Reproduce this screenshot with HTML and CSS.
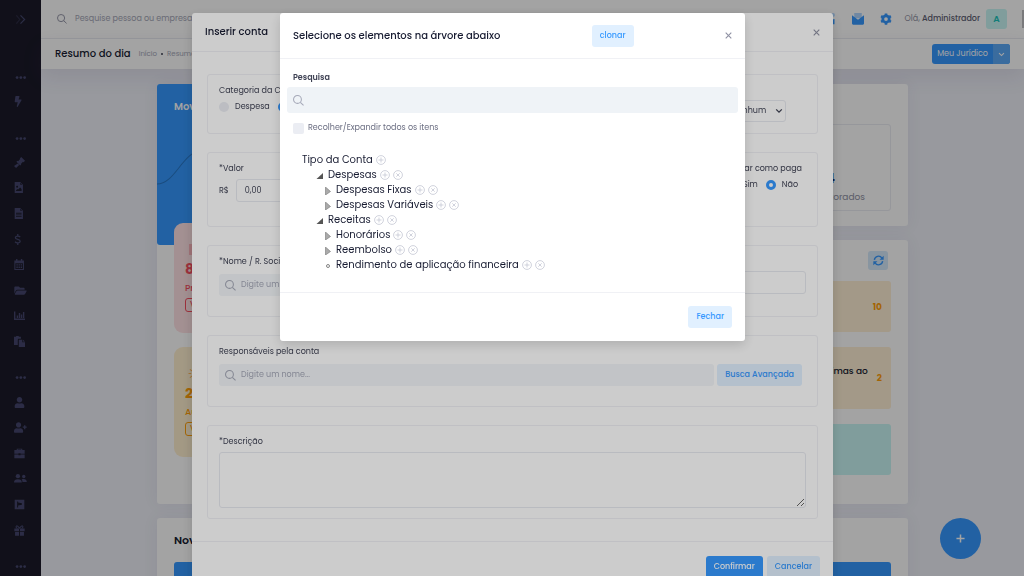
FILE: index.html
```html
<!DOCTYPE html>
<html lang="pt-BR">
<head>
    <meta charset="UTF-8">
    <meta name="viewport" content="width=device-width, initial-scale=1.0">
    <title>Resumo do dia</title>
    <link rel="stylesheet" href="styles.css">
</head>
<body>

<svg class="sprite" aria-hidden="true">
    <symbol id="dots" viewBox="0 0 16 16"><circle cx="3" cy="8" r="2"/><circle cx="8.500" cy="8" r="2"/><circle cx="14" cy="8" r="2"/></symbol>
    <symbol id="bolt" viewBox="0 0 448 512"><path d="M296 160H180.600l42.600-129.800C227.200 15 215.700 0 200 0H56C44 0 33.800 8.900 32.200 20.800l-32 240C-1.700 275.200 9.500 288 24 288h118.700L96.600 482.500c-3.600 15.200 8 29.500 23.300 29.500 8.400 0 16.400-4.400 20.800-12l176-304c9.300-15.900-2.200-36-20.700-36z"/></symbol>
    <symbol id="gavel" viewBox="0 0 16 16"><path d="M10.500 0L16 5.500 14 7.500l-1-.5-3 3 .5 1L9 12.500 3.500 7 5 5.500l1 .5 3-3-.5-1zM5.500 9.500l2 2L3 16 0 13z"/></symbol>
    <symbol id="file-img" viewBox="0 0 16 16"><path fill-rule="evenodd" d="M1 0h8l4 4v12H1zM9 1v3h3zM3 13h8v-3L9 8l-3 3-1-1-2 2zM4.500 5.500a1.300 1.300 0 1 0 .1 0z"/></symbol>
    <symbol id="file" viewBox="0 0 16 16"><path fill-rule="evenodd" d="M1 0h8l4 4v12H1zM9 1v3h3zM3 7v1.200h8V7zM3 9.500v1.200h8V9.500zM3 12v1.200h8V12z"/></symbol>
    <symbol id="dollar" viewBox="0 0 16 16"><path fill="none" stroke="currentColor" stroke-width="1.900" d="M9 4.500C7.500 2.500 2 2.500 2 5.500c0 3 7 1.800 7 5 0 3-5.500 3-7.500.8M5.500 0v3M5.500 13v3"/></symbol>
    <symbol id="calendar" viewBox="0 0 16 16"><path fill-rule="evenodd" d="M3 0h2v2h5V0h2v2h2.500v14H.5V2H3zM2 6v8.500h11V6zM3.500 7.500h2v2h-2zM6.600 7.500h2v2h-2zM9.700 7.500h2v2h-2zM3.500 11h2v2h-2zM6.600 11h2v2h-2zM9.700 11h2v2h-2z"/></symbol>
    <symbol id="folder" viewBox="0 0 576 512"><path d="M572.700 292.100L500.300 416.200A64 64 0 0 1 445 448H45c-18.500 0-30-20-20.700-36l72.400-124.200A64 64 0 0 1 152 256h400c18.500 0 30 20 20.700 36.100zM152 224h328v-48c0-26.500-21.500-48-48-48H272l-64-64H48C21.500 64 0 85.500 0 112v278l69-118.400C86.200 242.300 118 224 152 224z"/></symbol>
    <symbol id="chart" viewBox="0 0 16 16"><path d="M0 2h2v10.500h14v2H0zM4 8h2v3.500H4zM7 4.500h2v7H7zM10 6.500h2v5h-2zM13 3h2v8.500h-2z"/></symbol>
    <symbol id="copy" viewBox="0 0 16 16"><path d="M0 1h3a1.800 1.800 0 0 1 4 0h3v3H7.500C6 4 5.500 4.500 5.500 6v7H0zM7 5.500h5V9h4v7H7zM13 5.500L16 8h-3z"/></symbol>
    <symbol id="user" viewBox="0 0 448 512"><path d="M224 256c70.700 0 128-57.300 128-128S294.700 0 224 0 96 57.300 96 128s57.300 128 128 128zm89.600 32h-16.700c-22.200 10.200-46.900 16-72.900 16s-50.600-5.800-72.900-16h-16.700C60.200 288 0 348.200 0 422.400V464c0 26.500 21.500 48 48 48h352c26.500 0 48-21.500 48-48v-41.600c0-74.200-60.200-134.400-134.400-134.400z"/></symbol>
    <symbol id="user-plus" viewBox="0 0 640 512"><path d="M224 256c70.700 0 128-57.300 128-128S294.700 0 224 0 96 57.300 96 128s57.300 128 128 128zm89.600 32h-16.700c-22.200 10.200-46.900 16-72.900 16s-50.600-5.800-72.900-16h-16.700C60.200 288 0 348.200 0 422.400V464c0 26.500 21.500 48 48 48h352c26.500 0 48-21.500 48-48v-41.600c0-74.200-60.200-134.400-134.400-134.400zM624 208h-64v-64h-64v64h-64v64h64v64h64v-64h64z"/></symbol>
    <symbol id="case" viewBox="0 0 16 16"><path fill-rule="evenodd" d="M4 3V1h8v2h3.500v5.500H9.500v-1h-3v1H.5V3zM5.500 2.300V3h5v-.7zM.5 9.500h6v1.200h3V9.500h6V15H.5z"/></symbol>
    <symbol id="users" viewBox="0 0 20 16"><circle cx="6" cy="4.500" r="3.300"/><path d="M0 14c0-4 2-5 6-5s6 1 6 5z"/><circle cx="15" cy="5" r="2.600"/><path d="M13 13.500c0-2-.4-3-1.300-4.200 4-1.500 8-.5 8 4.200z"/></symbol>
    <symbol id="square" viewBox="0 0 16 16"><path fill-rule="evenodd" d="M1 1h14v14H1zM4.500 3.500v9H6V9.500l5.500-1V6L6 5.200V3.500z"/></symbol>
    <symbol id="gift" viewBox="0 0 16 16"><path d="M.5 5h6.800v4H.5zM8.700 5h6.800v4H8.700zM1.500 10h5.800v5.500H1.500zM8.700 10h5.800v5.500H8.700z"/><path fill="none" stroke="currentColor" stroke-width="1.500" d="M8 5C6 .5 3 .5 3 2.800 3 4 4 4.500 5 5M8 5c2-4.500 5-4.500 5-2.200C13 4 12 4.500 11 5"/></symbol>
    <symbol id="search" viewBox="0 0 16 16"><g fill="none" stroke="currentColor" stroke-width="1.500"><circle cx="6.500" cy="6.500" r="5.700"/><path d="M10.700 10.700l4.600 4.300"/></g></symbol>
    <symbol id="close" viewBox="0 0 10 10"><path fill="none" stroke="currentColor" stroke-width="1.600" d="M1 1l8 8M9 1L1 9"/></symbol>
    <symbol id="chevron" viewBox="0 0 10 10"><path fill="none" stroke="currentColor" stroke-width="1.600" d="M1.500 3L5 6.500 8.500 3"/></symbol>
    <symbol id="forward" viewBox="0 0 16 16"><g fill="none" stroke="currentColor" stroke-width="1.700"><path opacity=".4" d="M2 2l5 6-5 6"/><path d="M8 2l6 6-6 6"/></g></symbol>
    <symbol id="chat" viewBox="0 0 16 16"><rect x="1" y="0" width="13" height="14" rx="4"/></symbol>
    <symbol id="bell" viewBox="0 0 16 16"><path d="M0 1h8v5c0 2 1.500 3 6 2v7H0z"/><circle cx="12" cy="2.500" r="2.500" opacity=".4"/></symbol>
    <symbol id="mail" viewBox="0 0 16 16"><path opacity=".4" d="M3 0h10v7H3z"/><path d="M0 3l8 6 8-6v11a1.500 1.500 0 0 1-1.500 1.500h-13A1.500 1.500 0 0 1 0 14z"/></symbol>
    <symbol id="gear" viewBox="0 0 16 16"><circle cx="8" cy="8" r="4.300" fill="none" stroke="currentColor" stroke-width="3.600"/><g stroke="currentColor" stroke-width="3.400"><path d="M8 .5v3M8 12.500v3M1.500 4.200l2.700 1.600M11.800 10.200l2.700 1.600M1.500 11.800l2.700-1.600M11.800 5.800l2.700-1.600"/></g></symbol>
    <symbol id="sync" viewBox="0 0 16 16"><path fill="none" stroke="currentColor" stroke-width="2" d="M2 7a6 6 0 0 1 11-2.500M14 9a6 6 0 0 1-11 2.500"/><path d="M15.500 1v6h-6zM.5 15V9h6z"/></symbol>
    <symbol id="plus" viewBox="0 0 10 10"><path fill="none" stroke="currentColor" stroke-width="1.700" d="M5 .5v9M.5 5h9"/></symbol>
    <symbol id="add" viewBox="0 0 12 12"><g fill="none" stroke="currentColor"><circle cx="6" cy="6" r="5.300"/><path d="M6 3v6M3 6h6"/></g></symbol>
    <symbol id="del" viewBox="0 0 12 12"><g fill="none" stroke="currentColor"><circle cx="6" cy="6" r="5.300"/><path d="M4 4l4 4M8 4L4 8"/></g></symbol>
    <symbol id="open" viewBox="0 0 8 8"><path fill="#555" d="M7 1v6H.5z"/></symbol>
    <symbol id="closed" viewBox="0 0 8 8"><path fill="#aaa" stroke="#777" stroke-width=".6" d="M1.500 0L6.500 4.500l-5 3.500z"/></symbol>
    <symbol id="leaf" viewBox="0 0 8 8"><circle cx="4" cy="4" r="1.500" fill="none" stroke="#666" stroke-width=".8"/></symbol>
</svg>

<div class="app">
    <aside class="sidebar">
        <button class="brand" aria-label="Expandir menu"><svg><use href="#forward"/></svg></button>
        <ul class="nav">
            <li class="section"><svg><use href="#dots"/></svg></li>
            <li><a href="#" aria-label="Atalhos"><svg><use href="#bolt"/></svg></a></li>
            <li class="section"><svg><use href="#dots"/></svg></li>
            <li><a href="#" aria-label="Processos"><svg><use href="#gavel"/></svg></a></li>
            <li><a href="#" aria-label="Contratos"><svg><use href="#file-img"/></svg></a></li>
            <li><a href="#" aria-label="Documentos"><svg><use href="#file"/></svg></a></li>
            <li><a href="#" aria-label="Financeiro"><svg><use href="#dollar"/></svg></a></li>
            <li><a href="#" aria-label="Agenda"><svg><use href="#calendar"/></svg></a></li>
            <li><a href="#" aria-label="Arquivos"><svg class="wide"><use href="#folder"/></svg></a></li>
            <li><a href="#" aria-label="Relatórios"><svg><use href="#chart"/></svg></a></li>
            <li><a href="#" aria-label="Modelos"><svg><use href="#copy"/></svg></a></li>
            <li class="section"><svg><use href="#dots"/></svg></li>
            <li><a href="#" aria-label="Pessoas"><svg><use href="#user"/></svg></a></li>
            <li><a href="#" aria-label="Nova pessoa"><svg class="wide"><use href="#user-plus"/></svg></a></li>
            <li><a href="#" aria-label="Escritório"><svg><use href="#case"/></svg></a></li>
            <li><a href="#" aria-label="Equipe"><svg class="wide"><use href="#users"/></svg></a></li>
            <li><a href="#" aria-label="Publicações"><svg><use href="#square"/></svg></a></li>
            <li><a href="#" aria-label="Presentes"><svg><use href="#gift"/></svg></a></li>
            <li class="section"><svg><use href="#dots"/></svg></li>
        </ul>
    </aside>

    <div class="main">
        <header class="topbar">
            <svg class="top-search"><use href="#search"/></svg>
            <input class="top-input" type="text" placeholder="Pesquise pessoa ou empresa" aria-label="Pesquise pessoa ou empresa">
            <nav class="top-icons">
                <button aria-label="Chat"><svg><use href="#chat"/></svg></button>
                <button aria-label="Avisos"><svg><use href="#bell"/></svg></button>
                <button aria-label="Mensagens"><svg><use href="#mail"/></svg></button>
                <button aria-label="Configurações"><svg><use href="#gear"/></svg></button>
            </nav>
            <span class="hello">Olá, <b>Administrador</b></span>
            <span class="avatar">A</span>
            <span class="handle"></span>
        </header>

        <div class="subheader">
            <h1>Resumo do dia</h1>
            <a href="#">Início</a><i></i><a href="#">Resumo</a>
            <div class="split">
                <button>Meu Jurídico</button>
                <button class="split-arrow" aria-label="Mais opções"><svg><use href="#chevron"/></svg></button>
            </div>
        </div>

        <main class="content">
            <section class="card moves">
                <div class="moves-head">
                    <h2>Movimentações</h2>
                    <svg class="curve" viewBox="0 0 360 60" preserveAspectRatio="none"><path d="M0 40C18 40 24 8 46 5S90 30 120 30 180 8 220 8s80 30 140 20"/></svg>
                </div>
                <div class="tiles">
                    <div class="tile red">
                        <span class="tile-icon"></span>
                        <b>8</b><span>Prazos</span><a href="#">Ver</a>
                    </div>
                    <div class="tile yellow">
                        <svg class="sun" viewBox="0 0 16 16"><path d="M0 8h4M2 2l4 3M2 14l4-3M8 0v4M8 12v4"/></svg>
                        <b>2</b><span>Audiências</span><a href="#">Ver</a>
                    </div>
                </div>
            </section>

            <div class="column">
                <section class="card stats">
                    <div class="stat-box">
                        <b>24</b>
                        <span>Processos monitorados</span>
                    </div>
                </section>
                <section class="card alerts">
                    <button class="sync" aria-label="Atualizar"><svg><use href="#sync"/></svg></button>
                    <div class="alert"><b>10</b></div>
                    <div class="alert tall"><p>Tarefas próximas ao<br>vencimento</p><b>2</b></div>
                    <div class="alert green"></div>
                </section>
            </div>

            <section class="card news">
                <h2>Novidades</h2>
                <div class="news-bar"></div>
            </section>
        </main>
    </div>
    <button class="fab" aria-label="Adicionar"><svg><use href="#plus"/></svg></button>
</div>

<div class="overlay">
    <form class="modal account">
        <div class="modal-head">
            <h3>Inserir conta</h3>
            <button type="button" class="close" aria-label="Fechar janela"><svg><use href="#close"/></svg></button>
        </div>
        <div class="modal-body">
            <div class="box box-category">
                <div class="group">
                    <span class="label">Categoria da Conta</span>
                    <div class="radios">
                        <label><input type="radio" name="category">Despesa</label>
                        <label><input type="radio" name="category" checked>Receita</label>
                    </div>
                </div>
                <div class="repeat">
                    <select aria-label="Parcelamento"><option>Nenhum</option></select>
                    <svg><use href="#chevron"/></svg>
                </div>
            </div>
            <div class="box box-value">
                <div class="group">
                    <label class="label" for="value">*Valor</label>
                    <div class="money"><span>R$</span><input id="value" type="text" value="0,00"></div>
                </div>
                <div class="group paid">
                    <span class="label">Marcar como paga</span>
                    <div class="radios">
                        <label><input type="radio" name="paid">Sim</label>
                        <label><input type="radio" name="paid" checked>Não</label>
                    </div>
                </div>
            </div>
            <div class="box box-name">
                <div class="group">
                    <label class="label" for="name">*Nome / R. Social</label>
                    <div class="search"><svg><use href="#search"/></svg><input id="name" type="text" placeholder="Digite um nome..."></div>
                </div>
                <input class="field" type="text" aria-label="Documento">
            </div>
            <div class="box box-owner">
                <div class="group">
                    <label class="label" for="owner">Responsáveis pela conta</label>
                    <div class="owner-row">
                        <div class="search"><svg><use href="#search"/></svg><input id="owner" type="text" placeholder="Digite um nome..."></div>
                        <button type="button" class="btn light">Busca Avançada</button>
                    </div>
                </div>
            </div>
            <div class="box box-text">
                <div class="group">
                    <label class="label" for="text">*Descrição</label>
                    <textarea id="text"></textarea>
                </div>
            </div>
        </div>
        <div class="modal-foot">
            <button type="button" class="btn primary">Confirmar</button>
            <button type="button" class="btn light">Cancelar</button>
        </div>
    </form>
</div>

<div class="overlay">
    <div class="modal picker">
        <div class="modal-head">
            <h3>Selecione os elementos na árvore abaixo</h3>
            <button class="btn light clone">clonar</button>
            <button class="close" aria-label="Fechar janela"><svg><use href="#close"/></svg></button>
        </div>
        <div class="modal-body">
            <label class="picker-label" for="filter">Pesquisa</label>
            <div class="search"><svg><use href="#search"/></svg><input id="filter" type="text"></div>
            <label class="check"><input type="checkbox">Recolher/Expandir todos os itens</label>
            <div class="tree">
                <div class="node">Tipo da Conta <button aria-label="Incluir"><svg><use href="#add"/></svg></button></div>
                <ul>
                    <li>
                        <div class="node"><svg class="mark"><use href="#open"/></svg>Despesas <button aria-label="Incluir"><svg><use href="#add"/></svg></button><button aria-label="Excluir"><svg><use href="#del"/></svg></button></div>
                        <ul>
                            <li class="node"><svg class="mark"><use href="#closed"/></svg>Despesas Fixas <button aria-label="Incluir"><svg><use href="#add"/></svg></button><button aria-label="Excluir"><svg><use href="#del"/></svg></button></li>
                            <li class="node"><svg class="mark"><use href="#closed"/></svg>Despesas Variáveis <button aria-label="Incluir"><svg><use href="#add"/></svg></button><button aria-label="Excluir"><svg><use href="#del"/></svg></button></li>
                        </ul>
                    </li>
                    <li>
                        <div class="node"><svg class="mark"><use href="#open"/></svg>Receitas <button aria-label="Incluir"><svg><use href="#add"/></svg></button><button aria-label="Excluir"><svg><use href="#del"/></svg></button></div>
                        <ul>
                            <li class="node"><svg class="mark"><use href="#closed"/></svg>Honorários <button aria-label="Incluir"><svg><use href="#add"/></svg></button><button aria-label="Excluir"><svg><use href="#del"/></svg></button></li>
                            <li class="node"><svg class="mark"><use href="#closed"/></svg>Reembolso <button aria-label="Incluir"><svg><use href="#add"/></svg></button><button aria-label="Excluir"><svg><use href="#del"/></svg></button></li>
                            <li class="node"><svg class="mark"><use href="#leaf"/></svg>Rendimento de aplicação financeira <button aria-label="Incluir"><svg><use href="#add"/></svg></button><button aria-label="Excluir"><svg><use href="#del"/></svg></button></li>
                        </ul>
                    </li>
                </ul>
            </div>
        </div>
        <div class="modal-foot">
            <button class="btn light">Fechar</button>
        </div>
    </div>
</div>

</body>
</html>
```

FILE: styles.css
```css
* {
    box-sizing: border-box;
}
body {
    margin: 0;
    font-family: Poppins, Inter, sans-serif;
    font-size: 8px;
    line-height: 12px;
    color: #3f4254;
    background: #eef0f8;
    overflow: hidden;
}
button, input, select, textarea {
    font: inherit;
    color: inherit;
    margin: 0;
    padding: 0;
    border: 0;
    background: none;
}
h1, h2, h3, p, ul {
    margin: 0;
    padding: 0;
}
ul {
    list-style: none;
}
a {
    color: inherit;
    text-decoration: none;
}
svg {
    display: block;
    width: 11px;
    height: 11px;
    fill: currentColor;
}
.sprite {
    position: absolute;
    width: 0;
    height: 0;
}

/* page */
.app {
    display: flex;
    height: 100vh;
    overflow: hidden;
}
.sidebar {
    display: flex;
    flex-direction: column;
    width: 41px;
    flex: none;
    background: #1c1b2a;
    color: #45476e;
}
.brand {
    height: 38px;
    padding-left: 15px;
}
.nav {
    display: flex;
    flex-direction: column;
    flex: 1;
    margin-bottom: -2px;
    padding: 16px 0 0 14px;
}
.nav li {
    display: flex;
    flex: 1;
    align-items: center;
}
.nav .section {
    flex: none;
    height: 35px;
    padding: 12px 0 0 1px;
}
.nav svg.wide {
    width: 13px;
}
.main {
    display: flex;
    flex-direction: column;
    flex: 1;
    min-width: 0;
}
.topbar {
    display: flex;
    align-items: center;
    height: 39px;
    flex: none;
    padding-left: 16px;
    background: #fff;
    border-bottom: 1px solid #ebedf3;
    color: #8f91a3;
}
.top-search {
    width: 10px;
    height: 10px;
}
.top-input {
    flex: 1;
    min-width: 0;
    padding-left: 8px;
}
::placeholder {
    color: #a5a8b8;
    opacity: 1;
}
.top-icons {
    display: flex;
    gap: 16px;
    padding-right: 13px;
    color: #3699ff;
}
.top-icons svg {
    width: 12px;
    height: 12px;
}
.hello b {
    font-weight: 500;
    color: #5e6074;
}
.avatar {
    display: grid;
    place-items: center;
    width: 21px;
    height: 20px;
    margin: 0 15px 0 6px;
    border-radius: 3px;
    background: #c9f7f5;
    color: #1bc5bd;
    font-weight: 600;
    font-size: 9px;
}
.handle {
    width: 2px;
    height: 18px;
    background: #c0c0c4;
}
.subheader {
    display: flex;
    align-items: center;
    height: 30px;
    flex: none;
    padding: 0 14px;
    background: #fff;
    box-shadow: 0 8px 20px rgba(82, 63, 105, .1);
    color: #a5a8b8;
    font-size: 7px;
}
.subheader h1 {
    margin-right: 8px;
    font-size: 10px;
    font-weight: 500;
    color: #181c32;
}
.subheader i {
    width: 2px;
    height: 2px;
    margin: 0 4px;
    border-radius: 50%;
    background: #3f4254;
}
.split {
    display: flex;
    height: 20px;
    margin-left: auto;
    border-radius: 3px;
    overflow: hidden;
    background: #3699ff;
    color: #fff;
    font-size: 8px;
}
.split button {
    padding: 0 5px;
}
.split .split-arrow {
    background: #5caaf8;
}
.split svg {
    width: 7px;
    height: 7px;
}
.content {
    display: grid;
    grid-template-columns: 1fr 1fr;
    gap: 14px;
    width: 100%;
    max-width: 779px;
    margin: 0 auto;
    padding: 15px 14px 0;
}
.card {
    background: #fff;
    border-radius: 3px;
    box-shadow: 0 0 16px rgba(82, 63, 105, .07);
}
.card h2 {
    font-size: 11px;
    line-height: 14px;
    font-weight: 600;
}
.moves-head {
    height: 161px;
    padding-top: 16px;
    border-radius: 3px;
    background: #3699ff;
    color: #fff;
}
.moves-head h2 {
    padding-left: 17px;
    font-size: 10px;
}
.curve {
    width: 100%;
    height: 60px;
    margin-top: 30px;
    fill: none;
    stroke: #2a78c8;
    stroke-width: 1;
}
.tiles {
    display: grid;
    gap: 14px;
    margin-top: -22px;
    padding: 0 17px;
}
.tile {
    display: flex;
    flex-direction: column;
    align-items: flex-start;
    height: 110px;
    padding: 21px 11px;
    border-radius: 9px;
    font-size: 9px;
    font-weight: 500;
}
.tile b {
    margin: 6px 0 5px;
    font-size: 14px;
    line-height: 16px;
}
.tile a {
    margin-top: 4px;
    padding: 0 4px;
    border: 1px solid currentColor;
    border-radius: 3px;
    font-size: 8px;
}
.tile.red {
    background: #ffe2e5;
    color: #f64e60;
}
.tile-icon {
    width: 18px;
    height: 19px;
    margin-left: 4px;
    background: #fbb4bc;
}
.tile.yellow {
    background: #fff0d0;
    color: #ff9f0a;
}
.sun {
    width: 18px;
    height: 19px;
    fill: none;
    stroke: #ffb85c;
    stroke-width: 1.5;
}
.column {
    display: grid;
    gap: 14px;
}
.stats {
    height: 142px;
    padding: 40px 17px 0;
}
.stat-box {
    display: flex;
    flex-direction: column;
    align-items: flex-end;
    height: 87px;
    padding: 47px 25px 0;
    border: 1px solid #ebedf3;
    border-radius: 3px;
    color: #8f91a3;
    font-size: 9px;
}
.stat-box b {
    margin-right: 30px;
    padding-bottom: 7px;
    font-size: 14px;
    color: #14256b;
}
.alerts {
    height: 264px;
    padding: 11px 17px;
}
.sync {
    display: grid;
    place-items: center;
    width: 20px;
    height: 19px;
    margin: 0 3px 11px auto;
    border-radius: 3px;
    background: #d5eafc;
    color: #3699ff;
}
.alert {
    display: flex;
    align-items: center;
    justify-content: flex-end;
    gap: 9px;
    height: 51px;
    margin-bottom: 15px;
    padding: 0 9px;
    border-radius: 3px;
    background: #fff0d5;
    color: #ff9f0a;
    font-size: 9px;
}
.alert p {
    line-height: 14px;
    font-weight: 500;
    color: #181c32;
}
.alert.tall {
    height: 62px;
}
.alert.green {
    background: #c9f7f5;
}
.news {
    grid-column: 1 / 3;
    padding: 15px 17px;
}
.news h2 {
    color: #181c32;
}
.news-bar {
    height: 40px;
    margin-top: 15px;
    border-radius: 3px;
    background: #3699ff;
}
.fab {
    position: fixed;
    right: 43px;
    bottom: 17px;
    display: grid;
    place-items: center;
    width: 41px;
    height: 41px;
    border-radius: 50%;
    background: #3699ff;
    color: #fff;
}
.fab svg {
    width: 9px;
    height: 9px;
}

/* modals */
.overlay {
    position: fixed;
    inset: 0;
    padding: 13px 0 0 1px;
    overflow: hidden;
    background: rgba(0, 0, 0, .2);
}
.modal {
    margin: 0 auto;
    background: #fff;
    border-radius: 3px;
    box-shadow: 0 4px 12px rgba(0, 0, 0, .15);
}
.modal-head {
    display: flex;
    align-items: center;
    height: 39px;
    padding: 0 13px;
    border-bottom: 1px solid #f0f1f5;
}
.modal-head h3 {
    font-size: 10px;
    font-weight: 500;
    color: #181c32;
}
.close {
    margin-left: auto;
    color: #8f91a3;
}
.close svg {
    width: 7px;
    height: 7px;
}
.btn {
    height: 22px;
    padding: 0 8px;
    border-radius: 3px;
    font-weight: 500;
}
.light {
    background: #e1f0ff;
    color: #3699ff;
}
.primary {
    background: #3699ff;
    color: #fff;
}
.modal-foot {
    display: flex;
    justify-content: flex-end;
    gap: 4px;
    padding: 13px;
    border-top: 1px solid #f0f1f5;
}
.search {
    display: flex;
    align-items: center;
    flex: 1;
    height: 22px;
    padding: 0 6px;
    border-radius: 3px;
    background: #f3f6f9;
    color: #a5a8b8;
}
.search input {
    flex: 1;
    min-width: 0;
    padding-left: 5px;
}

/* account form */
.account {
    max-width: 641px;
}
.account .modal-body {
    display: grid;
    gap: 18px;
    padding: 22px 15px;
}
.account .modal-foot {
    padding-top: 14px;
}
.box {
    display: flex;
    justify-content: space-between;
    gap: 16px;
    padding: 10px 11px;
    border: 1px solid #f0f1f5;
    border-radius: 3px;
}
.group {
    flex: 1;
}
.label {
    display: block;
    margin-bottom: 4px;
}
.radios {
    display: flex;
    gap: 8px;
}
.radios label {
    display: flex;
    align-items: center;
    gap: 6px;
}
.radios input {
    appearance: none;
    width: 10px;
    height: 10px;
    border-radius: 50%;
    background: #ebedf3;
}
.radios input:checked {
    border: 3px solid #3699ff;
    background: #fff;
}
.box-category {
    height: 60px;
}
.repeat {
    display: flex;
    align-items: center;
    width: 75px;
    height: 22px;
    margin: 15px 20px 0 0;
    padding: 0 2px 0 20px;
    border: 1px solid #e8eaf0;
    border-radius: 3px;
}
.repeat select {
    appearance: none;
    flex: 1;
    min-width: 0;
}
.repeat svg {
    width: 8px;
    height: 8px;
}
.box-value {
    height: 75px;
}
.money {
    display: flex;
    align-items: center;
    gap: 7px;
}
.money input, .field {
    width: 150px;
    height: 23px;
    padding: 0 8px;
    border: 1px solid #e8eaf0;
    border-radius: 3px;
}
.paid {
    flex: none;
    margin-right: 4px;
}
.paid .radios {
    justify-content: flex-end;
    padding-right: 4px;
}
.box-name, .box-owner {
    height: 72px;
}
.box-name .label, .box-owner .label {
    margin-bottom: 6px;
}
.box-name .field {
    flex: 1;
    margin-top: 15px;
}
.owner-row {
    display: flex;
    gap: 3px;
    margin-right: 4px;
}
.box-text {
    height: 94px;
}
textarea {
    display: block;
    width: 100%;
    height: 56px;
    border: 1px solid #e8eaf0;
    border-radius: 3px;
}

/* tree picker */
.picker {
    max-width: 465px;
}
.picker .modal-head {
    height: 46px;
}
.clone {
    margin-left: auto;
}
.picker .modal-body {
    padding: 13px 7px 20px;
}
.picker-label {
    display: block;
    margin: 0 6px 3px;
    font-weight: 600;
}
.picker .search {
    height: 26px;
    background: #eff3f7;
}
.check {
    display: flex;
    align-items: center;
    gap: 4px;
    margin: 9px 6px 18px;
    color: #6b6e82;
}
.check input {
    appearance: none;
    width: 11px;
    height: 11px;
    border-radius: 2px;
    background: #ebedf3;
}
.tree {
    padding-left: 15px;
    font-size: 10px;
    color: #181c32;
}
.tree > ul {
    padding-left: 14px;
}
.tree ul ul {
    padding-left: 8px;
}
.node {
    display: flex;
    align-items: center;
    gap: 3px;
    height: 15px;
}
.node svg {
    width: 10px;
    height: 10px;
}
.node button {
    color: #c8cad6;
}
.node .mark {
    width: 8px;
    height: 8px;
    margin: 3px 1px 0 0;
}
```
